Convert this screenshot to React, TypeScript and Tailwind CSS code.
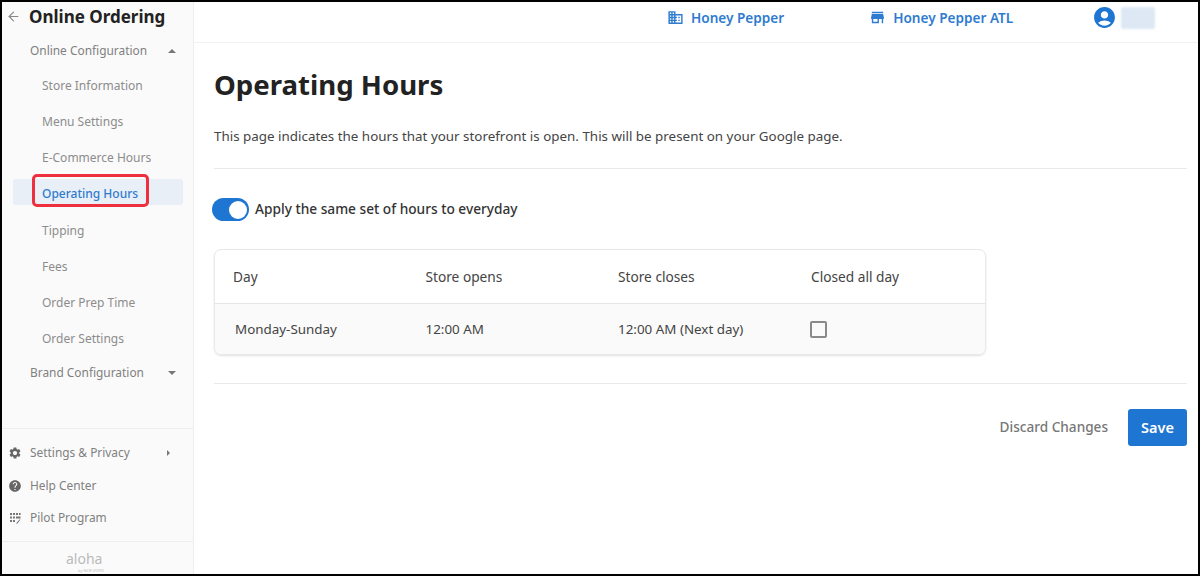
import React from "react";
import { ArrowLeft } from "lucide-react";
import { MdAccountCircle, MdBusiness, MdHelp, MdSettings, MdStore } from "react-icons/md";

const subItems = [
  { label: "Store Information", h: "h-[36px]" },
  { label: "Menu Settings", h: "h-[36px]" },
  { label: "E-Commerce Hours", h: "h-[36px]" },
  { label: "Operating Hours", h: "h-[36px]", active: true },
  { label: "Tipping", h: "h-[37px]" },
  { label: "Fees", h: "h-[36px]" },
  { label: "Order Prep Time", h: "h-[36px]" },
  { label: "Order Settings", h: "h-[36px]" },
];

function Caret({ dir }: { dir: "up" | "down" | "right" }) {
  const cls =
    dir === "up"
      ? "border-x-[4px] border-b-[4px] border-x-transparent border-b-[#777]"
      : dir === "down"
        ? "border-x-[4px] border-t-[4px] border-x-transparent border-t-[#777]"
        : "border-y-[3px] border-l-[3px] border-y-transparent border-l-[#777]";
  return <span className={`h-0 w-0 ${cls}`} />;
}

function PilotIcon() {
  return (
    <svg width="12" height="12" viewBox="0 0 12 12" fill="#777">
      <rect x="1" y="1" width="2" height="2" />
      <rect x="4" y="1" width="2" height="2" />
      <rect x="7" y="1" width="2" height="2" />
      <rect x="10" y="1" width="1.6" height="2" />
      <rect x="1" y="4.5" width="2" height="2" />
      <rect x="4" y="4.5" width="2" height="2" />
      <rect x="7" y="4.5" width="4.5" height="2" />
      <rect x="1" y="8" width="2" height="2" />
      <rect x="4" y="8" width="2" height="2" />
      <path d="M7 11.5 L10.5 7.5 L11.5 7.5 L8.5 11.5 Z" />
    </svg>
  );
}

function Sidebar() {
  return (
    <aside className="flex h-full w-[192px] shrink-0 flex-col border-r border-[#eeeeee] bg-[#fafafa]">
      <div className="flex h-[29px] items-center pl-[4px]">
        <ArrowLeft size={15} strokeWidth={1.75} className="text-[#888]" />
        <span className="ml-[8px] text-[17px] font-bold leading-none text-[#222]">Online Ordering</span>
      </div>
      <div className="mt-[3px] flex h-[34px] items-center justify-between pl-[28px] pr-[17px] text-[11.9px] text-[#808080]">
        <span>Online Configuration</span>
        <Caret dir="up" />
      </div>
      <div className="flex flex-col pl-[11px] pr-[10px]">
        {subItems.map((item) => (
          <div
            key={item.label}
            className={`flex items-center ${item.h} ${item.active ? "relative" : ""}`}
          >
            {item.active ? (
              <>
                <div className="absolute inset-x-0 top-[3px] h-[26px] rounded-[3px] bg-[#e9eff6]" />
                <div className="absolute left-[19px] top-[-2px] h-[33px] w-[117px] rounded-[5px] border-[3px] border-[#ee2f3d]" />
              </>
            ) : null}
            <span
              className={`relative pl-[29px] text-[12px] ${item.active ? "font-medium text-[#2f7bd0]" : "text-[#8c8c8c]"}`}
            >
              {item.label}
            </span>
          </div>
        ))}
      </div>
      <div className="flex h-[32px] items-center justify-between pl-[28px] pr-[17px] text-[11.9px] text-[#808080]">
        <span>Brand Configuration</span>
        <Caret dir="down" />
      </div>
      <div className="flex-1" />
      <div className="border-t border-[#eeeeee] pt-[7px]">
        <div className="flex h-[33px] items-center pl-[6px] pr-[23px] text-[11.9px] text-[#808080]">
          <MdSettings size={14} className="text-[#666]" />
          <span className="ml-[8px] flex-1">Settings &amp; Privacy</span>
          <Caret dir="right" />
        </div>
        <div className="flex h-[33px] items-center pl-[6px] text-[11.9px] text-[#808080]">
          <MdHelp size={14} className="text-[#666]" />
          <span className="ml-[8px]">Help Center</span>
        </div>
        <div className="flex h-[32px] items-center pl-[7px] text-[11.9px] text-[#808080]">
          <PilotIcon />
          <span className="ml-[9px]">Pilot Program</span>
        </div>
      </div>
      <div className="mt-[7px] flex h-[33px] flex-col border-t border-[#eeeeee] pt-[10px] leading-none">
        <span className="pl-[64px] text-[14px] leading-[14px] text-[#bbbbbb]">aloha</span>
        <span className="mt-[3px] pl-[76px] text-[4px] leading-[4px] text-[#bbbbbb]">by NCR VOYIX</span>
      </div>
    </aside>
  );
}

function Topbar() {
  return (
    <header className="flex h-[41px] shrink-0 items-center border-b border-[#f2f2f2] pb-[9px] pl-[473px] text-[13.6px] font-semibold text-[#2f7bd0]">
      <MdBusiness size={17} className="text-[#2f7bd0]" />
      <span className="ml-[7px] mt-[1px]">Honey Pepper</span>
      <MdStore size={17} className="ml-[85px] text-[#2f7bd0]" />
      <span className="ml-[7px] mt-[1px]">Honey Pepper ATL</span>
      <MdAccountCircle size={25} className="ml-[79px] text-[#1f76d2]" />
      <div className="ml-[4px] h-[22px] w-[34px] rounded-[2px] bg-[#dde8f4] blur-[1px]" />
    </header>
  );
}

function HoursTable() {
  return (
    <div className="mt-[28px] w-[772px] overflow-hidden rounded-[7px] border border-[#e8e8e8] shadow-[0_1px_2px_rgba(0,0,0,0.12)]">
      <div className="grid h-[54px] grid-cols-[192.5px_192.5px_193px_1fr] items-center border-b border-[#e6e6e6] pl-[18px] pt-[1px] text-[13.7px] text-[#444]">
        <span>Day</span>
        <span>Store opens</span>
        <span>Store closes</span>
        <span>Closed all day</span>
      </div>
      <div className="grid h-[50px] grid-cols-[190.5px_192.5px_192px_1fr] items-center bg-[#fafafa] pl-[20px] text-[13.4px] text-[#444]">
        <span>Monday-Sunday</span>
        <span>12:00 AM</span>
        <span>12:00 AM (Next day)</span>
        <span className="h-[17px] w-[17px] rounded-[2px] border-2 border-[#8a8a8a]" />
      </div>
    </div>
  );
}

export default function App() {
  return (
    <div
      className="flex h-[576px] w-[1200px] overflow-hidden border-2 border-black bg-white"
      style={{ fontFamily: '"Noto Sans", "Open Sans", sans-serif' }}
    >
      <Sidebar />
      <div className="flex min-w-0 flex-1 flex-col">
        <Topbar />
        <main className="pl-[20px] pr-[11px]">
          <h1 className="mt-[22px] text-[27.6px] font-bold leading-[38px] text-[#222]">Operating Hours</h1>
          <p className="mt-[23px] text-[13.4px] leading-[20px] text-[#444]">
            This page indicates the hours that your storefront is open. This will be present on your Google page.
          </p>
          <div className="mt-[22px] border-t border-[#e8e8e8]" />
          <div className="mt-[29px] flex items-center">
            <div className="-ml-[2px] flex h-[23px] w-[37px] items-center justify-end rounded-full bg-[#1f76d2] pr-[2px]">
              <div className="h-[18px] w-[18px] rounded-full bg-white" />
            </div>
            <span className="ml-[6px] text-[13.7px] font-medium text-[#333]">Apply the same set of hours to everyday</span>
          </div>
          <HoursTable />
          <div className="mt-[28px] border-t border-[#e8e8e8]" />
          <div className="mt-[25px] flex items-center justify-end">
            <span className="text-[13.6px] font-medium text-[#777]">Discard Changes</span>
            <button className="ml-[20px] h-[37px] w-[59px] rounded-[3px] bg-[#1f76d2] text-[14.5px] font-semibold text-white">
              Save
            </button>
          </div>
        </main>
      </div>
    </div>
  );
}
